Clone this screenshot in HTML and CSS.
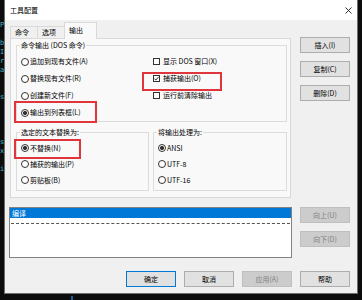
FILE: index.html
```html
<!DOCTYPE html>
<html>
<head>
    <title>工具配置</title>
    <link rel="stylesheet" href="styles.css">
</head>
<body>
    <!-- console behind the dialog -->
    <div class="console"><pre>


P

b
I
r
a


s




s
x

i</pre></div>

    <div class="screen">
        <div class="dialog">
            <div class="titlebar">
                <span class="title">工具配置</span>
                <svg class="close" width="7" height="7" viewBox="0 0 7 7">
                    <path d="M0.5 0.5L6.5 6.5M6.5 0.5L0.5 6.5" stroke="#1a1a1a" stroke-width="0.9" fill="none"/>
                </svg>
            </div>

            <div class="main">
                <div class="tabs-area">
                    <div class="tabs">
                        <div class="tab">命令</div>
                        <div class="tab">选项</div>
                        <div class="tab active">输出</div>
                    </div>
                    <div class="tab-page">
                        <!-- 命令输出 -->
                        <fieldset class="group">
                            <legend>命令输出 (DOS 命令)</legend>
                            <div class="group-grid">
                                <label class="opt"><span class="radio"></span>追加到现有文件(A)</label>
                                <label class="opt"><span class="check"></span>显示 DOS 窗口(X)</label>
                                <label class="opt"><span class="radio"></span>替换现有文件(R)</label>
                                <label class="opt mark mark-capture"><span class="check"><svg width="5" height="5" viewBox="0 0 5 5"><path d="M0.4 2.6L1.9 4.1L4.7 0.7" stroke="#222" stroke-width="0.9" fill="none"/></svg></span>捕获输出(O)</label>
                                <label class="opt"><span class="radio"></span>创建新文件(F)</label>
                                <label class="opt"><span class="check"></span>运行前清除输出</label>
                                <label class="opt mark mark-list"><span class="radio on"></span>输出到列表框(L)</label>
                            </div>
                        </fieldset>

                        <div class="row-groups">
                            <fieldset class="group group-replace">
                                <legend>选定的文本替换为:</legend>
                                <div class="group-list">
                                    <label class="opt mark mark-none"><span class="radio on"></span>不替换(N)</label>
                                    <label class="opt"><span class="radio"></span>捕获的输出(P)</label>
                                    <label class="opt"><span class="radio"></span>剪贴板(B)</label>
                                </div>
                            </fieldset>
                            <fieldset class="group group-encoding">
                                <legend>将输出处理为:</legend>
                                <div class="group-list">
                                    <label class="opt"><span class="radio on"></span>ANSI</label>
                                    <label class="opt"><span class="radio"></span>UTF-8</label>
                                    <label class="opt"><span class="radio"></span>UTF-16</label>
                                </div>
                            </fieldset>
                        </div>
                    </div>
                </div>

                <div class="side">
                    <button class="btn">插入(I)</button>
                    <button class="btn">复制(C)</button>
                    <button class="btn">删除(D)</button>
                </div>

                <div class="listbox">
                    <div class="item selected">编译</div>
                    <div class="item sep"></div>
                </div>

                <div class="side">
                    <button class="btn" disabled>向上(U)</button>
                    <button class="btn" disabled>向下(D)</button>
                </div>
            </div>

            <div class="footer">
                <button class="btn default">确定</button>
                <button class="btn">取消</button>
                <button class="btn" disabled>应用(A)</button>
                <button class="btn">帮助</button>
            </div>
        </div>
        <div class="below"><span class="tick"></span></div>
    </div>
</body>
</html>
```

FILE: styles.css
```css
* {
    box-sizing: border-box;
}
body {
    margin: 0;
    width: 362px;
    height: 300px;
    overflow: hidden;
    display: flex;
    background-color: #0c0c0c;
    font-family: "Noto Sans CJK SC", sans-serif;
    font-size: 7px;
    line-height: 9px;
    color: #000;
}
.console {
    width: 4px;
    overflow: hidden;
}
.console pre {
    margin: 0;
    padding-top: 3px;
    font-family: "DejaVu Sans Mono", monospace;
    font-size: 7px;
    line-height: 9px;
    color: #3ab4c4;
}
.screen {
    width: 354px;
}
.dialog {
    height: 294px;
    background-color: #f0f0f0;
    border: 1px solid #6e6e6e;
    border-top: none;
}
.titlebar {
    height: 20px;
    display: flex;
    align-items: center;
    padding: 0 5px 0 5px;
    background-color: #fff;
}
.close {
    margin-left: auto;
}
.main {
    display: grid;
    grid-template-columns: 283px 50px;
    grid-template-rows: 176px 51px;
    column-gap: 8px;
    row-gap: 9px;
    padding: 2px 0 0 4px;
}
.tabs {
    display: flex;
    align-items: flex-end;
    height: 16px;
    padding-left: 1px;
}
.tab {
    height: 12px;
    width: 28px;
    padding-left: 4px;
    line-height: 11px;
    border: 1px solid #d9d9d9;
    border-bottom: none;
    background-color: #f0f0f0;
}
.tab + .tab {
    margin-left: -1px;
}
.tab.active {
    position: relative;
    z-index: 1;
    width: 33px;
    height: 17px;
    margin-bottom: -1px;
    padding-top: 2px;
    background-color: #f9f9f9;
}
.tab-page {
    height: 160px;
    margin: 0 1px;
    padding: 2px 3px 0 5px;
    border: 1px solid #d9d9d9;
    background-color: #f9f9f9;
}
.group {
    margin: 0;
    padding: 0;
    min-width: 0;
    border: 1px solid #dcdcdc;
}
.group legend {
    margin-left: 3px;
    padding: 0 1px;
    line-height: 9px;
}
.group-grid {
    display: grid;
    grid-template-columns: 132px 1fr;
    grid-auto-rows: 17px;
    padding: 3px 0 0 4px;
}
.row-groups {
    display: flex;
    gap: 4px;
    margin-top: 6px;
}
.group-replace {
    width: 133px;
}
.group-encoding {
    flex: 1;
}
.group-list {
    display: grid;
    grid-auto-rows: 16px;
    padding: 3px 0 2px 4px;
}
.opt {
    position: relative;
    display: flex;
    align-items: center;
    white-space: nowrap;
}
.radio {
    flex-shrink: 0;
    width: 8px;
    height: 8px;
    margin-right: 1px;
    border: 1px solid #333;
    border-radius: 50%;
    background-color: #fff;
}
.radio.on {
    background: radial-gradient(circle at center, #333 1.8px, #fff 2.3px);
}
.check {
    flex-shrink: 0;
    display: flex;
    align-items: center;
    justify-content: center;
    width: 7px;
    height: 7px;
    margin-right: 3px;
    border: 1px solid #333;
    background-color: #fff;
}
/* red annotation boxes */
.mark::after {
    content: "";
    position: absolute;
    border: 2px solid #e0363b;
}
.mark-list::after {
    left: -7px;
    top: -3px;
    width: 79px;
    height: 18px;
}
.mark-capture::after {
    left: -11px;
    top: 2px;
    width: 76px;
    height: 15px;
}
.mark-none::after {
    left: -7px;
    top: -1px;
    width: 63px;
    height: 16px;
}
.side {
    display: flex;
    flex-direction: column;
    gap: 8px;
}
.tabs-area + .side {
    padding-top: 15px;
}
.btn {
    width: 50px;
    height: 16px;
    padding: 0;
    font: inherit;
    line-height: 9px;
    color: #000;
    border: 1px solid #adadad;
    background-color: #e1e1e1;
}
.btn.default {
    border-color: #0078d7;
}
.btn:disabled {
    color: #838383;
    border-color: #bfbfbf;
    background-color: #cccccc;
}
.listbox {
    border: 1px solid #828282;
    background-color: #fff;
}
.item {
    height: 10px;
    line-height: 10px;
    padding-left: 2px;
}
.item.selected {
    color: #fff;
    background-color: #0078d7;
}
.item.sep {
    height: 1px;
    margin: 5px 1px 0 1px;
    border-top: 1px dashed #555;
}
.footer {
    display: flex;
    justify-content: flex-end;
    gap: 8px;
    margin-top: 13px;
    padding-right: 7px;
}
.below {
    height: 6px;
    padding: 2px 0 0 67px;
}
.tick {
    display: block;
    width: 2px;
    height: 4px;
    background-color: #1c5d94;
}
```
